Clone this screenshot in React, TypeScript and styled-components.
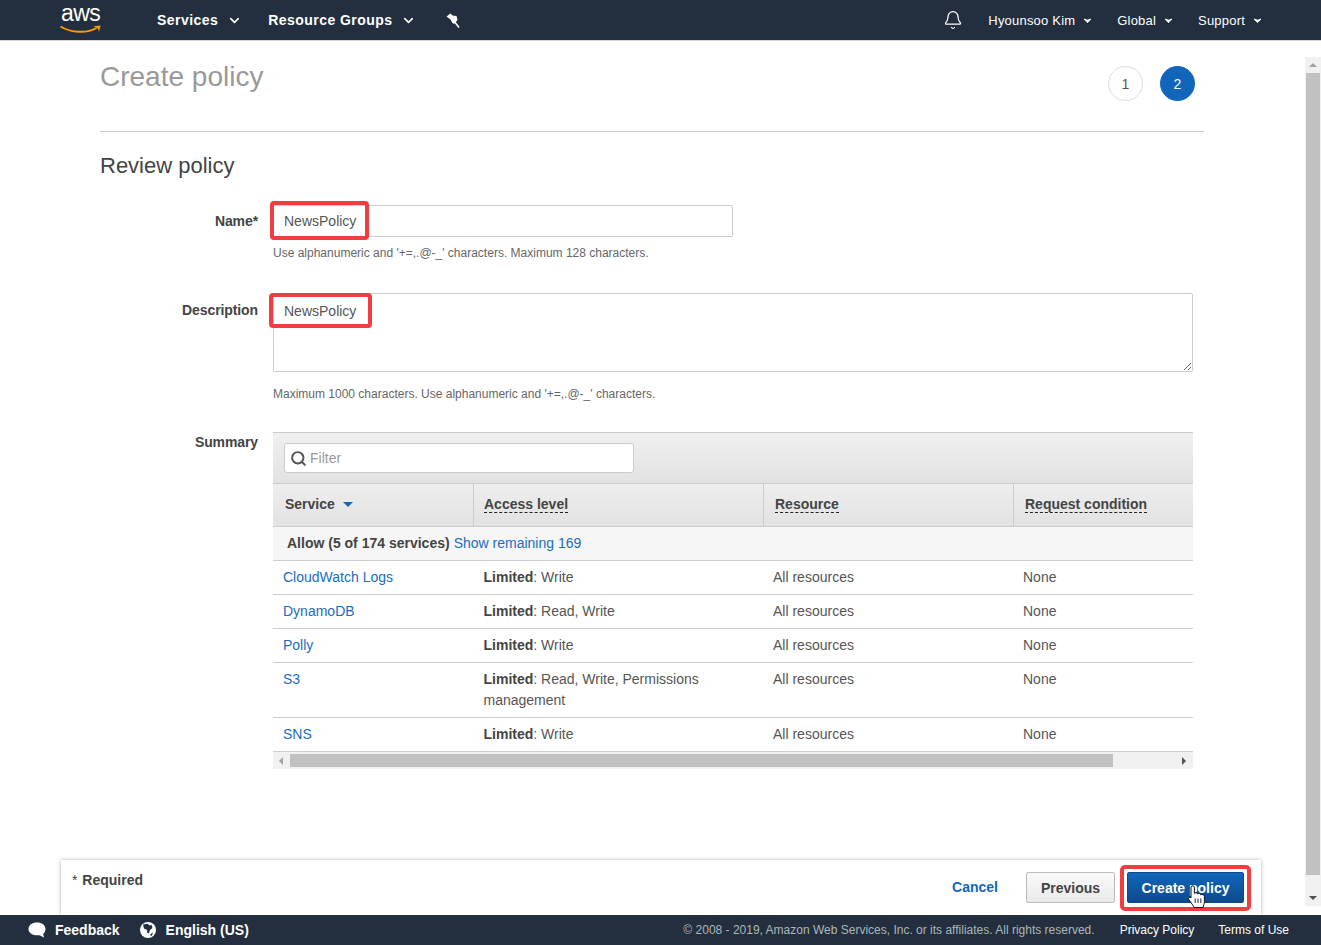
import React from 'react';
import styled, { createGlobalStyle } from 'styled-components';
import { Bell, ChevronDown, Search } from 'lucide-react';

const GlobalStyle = createGlobalStyle`
  html, body {
    margin: 0;
    padding: 0;
    height: 100%;
    overflow: hidden;
    background: #fff;
    font-family: "Liberation Sans", Arial, sans-serif;
    font-size: 14px;
    color: #444;
  }
  * { box-sizing: border-box; }
`;

const Page = styled.div`
  width: 1321px;
  height: 945px;
  display: flex;
  flex-direction: column;
`;

const TopNav = styled.header`
  height: 41px;
  flex: none;
  background: #232f3e;
  border-bottom: 1px solid #d5d5d5;
  display: flex;
  align-items: center;
  padding: 0 60px;
  color: #fff;
`;

const Logo = styled.div`
  width: 41px;
  height: 34px;
  margin-right: 56px;
  position: relative;
  text-align: center;
  font-size: 23px;
  line-height: 21px;
  letter-spacing: -0.6px;
  color: #fff;
  svg {
    position: absolute;
    left: 0;
    top: 20px;
  }
`;

const NavItem = styled.div<{ $gap: number }>`
  display: flex;
  align-items: center;
  font-weight: bold;
  font-size: 14px;
  letter-spacing: 0.45px;
  margin-right: ${(p) => p.$gap}px;
  svg {
    margin-left: 9px;
  }
`;

const PinWrap = styled.div`
  display: flex;
  align-items: center;
`;

const NavRight = styled.div`
  margin-left: auto;
  display: flex;
  align-items: center;
`;

const BellWrap = styled.div`
  display: flex;
  margin-right: 25px;
`;

const MenuItem = styled.div<{ $gap?: number }>`
  display: flex;
  align-items: center;
  font-size: 13px;
  letter-spacing: 0.2px;
  margin-right: ${(p) => p.$gap ?? 0}px;
  svg {
    margin-left: 9px;
  }
`;

const MenuCaret = () => (
  <svg width="7" height="5" viewBox="0 0 7 5">
    <path d="M0 0.6L3.5 1.8L7 0.6V1.6L3.5 5L0 1.6Z" fill="#fff" />
  </svg>
);

const Body = styled.div`
  flex: 1;
  display: flex;
  min-height: 0;
`;

const Content = styled.main`
  width: 1305px;
  display: flex;
  flex-direction: column;
`;

const Inner = styled.div`
  flex: 1;
  padding: 0 101px 0 100px;
`;

const TitleRow = styled.div`
  height: 91px;
  border-bottom: 1px solid #ccc;
  display: flex;
  justify-content: space-between;
  padding: 20px 9px 0 0;
`;

const Title = styled.h1`
  margin: 0;
  font-size: 28px;
  line-height: 32px;
  font-weight: normal;
  color: #999;
`;

const Steps = styled.div`
  display: flex;
  gap: 17px;
  margin-top: 5px;
`;

const Step = styled.div<{ $active?: boolean }>`
  width: 35px;
  height: 35px;
  border-radius: 50%;
  display: flex;
  align-items: center;
  justify-content: center;
  background: ${(p) => (p.$active ? '#1166bb' : '#fff')};
  color: ${(p) => (p.$active ? '#fff' : '#555')};
  border: 1px solid ${(p) => (p.$active ? '#1166bb' : '#ddd')};
`;

const SubTitle = styled.h2`
  margin: 21px 0 0;
  font-size: 22px;
  line-height: 26px;
  font-weight: normal;
  color: #444;
`;

const FormRow = styled.div<{ $top: number }>`
  display: grid;
  grid-template-columns: 158px 920px;
  column-gap: 15px;
  margin-top: ${(p) => p.$top}px;
`;

const Label = styled.label<{ $top: number }>`
  text-align: right;
  font-weight: bold;
  color: #444;
  line-height: 16px;
  padding-top: ${(p) => p.$top}px;
  letter-spacing: -0.1px;
`;

const Highlight = styled.span`
  position: absolute;
  border: 4px solid #f13d3f;
  border-radius: 4px;
  pointer-events: none;
`;

const FieldWrap = styled.div`
  position: relative;
`;

const NameInput = styled.input`
  display: block;
  width: 460px;
  height: 32px;
  border: 1px solid #ccc;
  border-radius: 2px;
  padding: 0 10px;
  font-family: inherit;
  font-size: 14px;
  color: #555;
  outline: none;
`;

const NameHighlight = styled(Highlight)`
  left: -3px;
  top: -4px;
  width: 99px;
  height: 39px;
`;

const DescArea = styled.textarea`
  display: block;
  width: 920px;
  height: 79px;
  border: 1px solid #ccc;
  border-radius: 2px;
  padding: 8px 10px;
  margin: 0;
  font-family: inherit;
  font-size: 14px;
  line-height: 18px;
  color: #555;
  outline: none;
`;

const DescHighlight = styled(Highlight)`
  left: -4px;
  top: 0;
  width: 103px;
  height: 35px;
`;

const Hint = styled.div<{ $top: number }>`
  margin-top: ${(p) => p.$top}px;
  font-size: 12px;
  line-height: 14px;
  color: #666;
`;

const PolicyTable = styled.div`
  width: 920px;
`;

const FilterBar = styled.div`
  height: 51px;
  padding: 10px 11px;
  background: linear-gradient(#f0f0f0, #e2e2e2);
  border-top: 1px solid #ccc;
`;

const FilterBox = styled.div`
  width: 350px;
  height: 30px;
  background: #fff;
  border: 1px solid #ccc;
  border-radius: 3px;
  display: flex;
  align-items: center;
  padding-left: 5px;
  gap: 3px;
  color: #999;
  svg {
    color: #555;
  }
`;

const Row = styled.div<{ $height: number }>`
  display: grid;
  grid-template-columns: 200px 290px 250px 180px;
  height: ${(p) => p.$height}px;
  border-bottom: 1px solid #ccc;
`;

const HeadRow = styled(Row)`
  background: linear-gradient(#eee, #e2e2e2);
  border-top: 1px solid #ccc;
`;

const HeadCell = styled.div`
  display: flex;
  align-items: center;
  padding: 0 0 1px 10px;
  font-weight: bold;
  color: #444;
  &:first-child {
    padding: 0 0 3px 12px;
  }
  &:nth-child(n + 3) {
    padding-left: 11px;
  }
  & + & {
    border-left: 1px solid #ccc;
  }
`;

const Dashed = styled.span`
  line-height: 16px;
  border-bottom: 1px dashed #222;
`;

const SortCaret = styled.span`
  width: 0;
  height: 0;
  margin-left: 8px;
  margin-top: 2px;
  border-left: 5px solid transparent;
  border-right: 5px solid transparent;
  border-top: 5px solid #1166bb;
`;

const GroupRow = styled.div`
  height: 34px;
  background: #f6f6f6;
  border-bottom: 1px solid #ccc;
  display: flex;
  align-items: center;
  padding: 0 0 2px 14px;
  gap: 4px;
  b {
    color: #444;
  }
`;

const Link = styled.a`
  color: #1a6dc0;
  text-decoration: none;
`;

const Cell = styled.div<{ $left: number }>`
  padding: 6px 10px 0 ${(p) => p.$left}px;
  line-height: 21px;
  color: #555;
  b {
    color: #444;
  }
`;

const HScroll = styled.div`
  height: 17px;
  background: #f1f1f1;
  display: flex;
  align-items: center;
  padding: 0 7px 0 6px;
`;

const HThumb = styled.div`
  width: 823px;
  height: 13px;
  background: #c1c1c1;
  margin: 0 auto 0 7px;
`;

const ArrowH = styled.span<{ $right?: boolean }>`
  width: 0;
  height: 0;
  border-top: 4px solid transparent;
  border-bottom: 4px solid transparent;
  border-left: ${(p) => (p.$right ? '4px solid #505050' : '0')};
  border-right: ${(p) => (p.$right ? '0' : '4px solid #a3a3a3')};
`;

const ActionBar = styled.div`
  width: 1200px;
  height: 55px;
  margin-left: 61px;
  flex: none;
  background: #fff;
  box-shadow: 0 0 4px rgba(0, 0, 0, 0.3);
  display: flex;
  justify-content: space-between;
  padding: 12px 17px 0 11px;
`;

const Required = styled.div`
  font-weight: bold;
  color: #444;
  line-height: 16px;
  span {
    font-weight: normal;
    margin-right: 1px;
  }
`;

const Actions = styled.div`
  display: flex;
  align-items: flex-start;
  position: relative;
`;

const CancelLink = styled(Link)`
  font-weight: bold;
  margin: 7px 28px 0 0;
  line-height: 16px;
  color: #1166bb;
`;

const Secondary = styled.button`
  width: 89px;
  height: 31px;
  padding: 0;
  margin-right: 12px;
  border: 1px solid #bbb;
  border-radius: 2px;
  background: linear-gradient(#fafafa, #e9e9e9);
  font-family: inherit;
  font-size: 14px;
  font-weight: bold;
  color: #444;
`;

const Primary = styled.button`
  width: 117px;
  height: 31px;
  padding: 0;
  border: 1px solid #0c4a8a;
  border-radius: 2px;
  background: linear-gradient(#1166bb, #0d4a8c);
  font-family: inherit;
  font-size: 14px;
  font-weight: bold;
  color: #fff;
`;

const ButtonHighlight = styled(Highlight)`
  right: -7px;
  top: -7px;
  width: 131px;
  height: 46px;
  border-radius: 5px;
`;

const HandCursor = styled.svg`
  position: absolute;
  right: 38px;
  top: 13px;
`;

const VScroll = styled.aside`
  width: 16px;
  height: 849px;
  margin-top: 16px;
  background: #f1f1f1;
  display: flex;
  flex-direction: column;
  align-items: center;
`;

const VThumb = styled.div`
  width: 14px;
  height: 802px;
  background: #c1c1c1;
  margin: 6px 0 auto;
`;

const ArrowV = styled.span<{ $down?: boolean }>`
  width: 0;
  height: 0;
  margin: ${(p) => (p.$down ? '0 0 6px' : '6px 0 0')};
  border-left: 4px solid transparent;
  border-right: 4px solid transparent;
  border-bottom: ${(p) => (p.$down ? '0' : '4px solid #a3a3a3')};
  border-top: ${(p) => (p.$down ? '4px solid #505050' : '0')};
`;

const Footer = styled.footer`
  height: 30px;
  flex: none;
  background: #232f3e;
  display: flex;
  align-items: center;
  padding: 0 32px 0 28px;
  color: #fff;
`;

const FooterItem = styled.div<{ $gap: number; $icon: number }>`
  display: flex;
  align-items: center;
  gap: ${(p) => p.$icon}px;
  margin-right: ${(p) => p.$gap}px;
  font-weight: bold;
`;

const Copyright = styled.div`
  margin-left: auto;
  margin-right: 25px;
  font-size: 12px;
  color: #aab7b8;
`;

const FooterLink = styled.div<{ $gap?: number }>`
  font-size: 12px;
  margin-right: ${(p) => p.$gap ?? 0}px;
`;

const rows = [
  { service: 'CloudWatch Logs', access: 'Write', height: 34 },
  { service: 'DynamoDB', access: 'Read, Write', height: 34 },
  { service: 'Polly', access: 'Write', height: 34 },
  { service: 'S3', access: 'Read, Write, Permissions management', height: 55 },
  { service: 'SNS', access: 'Write', height: 34 },
];

const App: React.FC = () => {
  return (
    <Page>
      <GlobalStyle />
      <TopNav>
        <Logo>
          aws
          <svg width="41" height="12" viewBox="0 0 41 12">
            <path d="M0.5 3.5C11 10 27 10.5 36.5 5" fill="none" stroke="#f90" strokeWidth="2" />
            <path d="M33.5 3.2L40.6 2.6L39 9L38 5.4Z" fill="#f90" />
          </svg>
        </Logo>
        <NavItem $gap={26}>
          Services
          <ChevronDown size={15} strokeWidth={2.6} />
        </NavItem>
        <NavItem $gap={30}>
          Resource Groups
          <ChevronDown size={15} strokeWidth={2.6} />
        </NavItem>
        <PinWrap>
          <svg width="14" height="15" viewBox="0 0 14 15">
            <path d="M0.5 3.5L4.5 0.5L6.5 2.5L10.5 3L11.5 7L8 11L6.5 10L4.5 6.5Z" fill="#fff" />
            <path d="M8 8L13 14.5" stroke="#fff" strokeWidth="1.5" />
          </svg>
        </PinWrap>
        <NavRight>
          <BellWrap>
            <Bell size={20} strokeWidth={1.5} color="#fff" />
          </BellWrap>
          <MenuItem $gap={26}>
            Hyounsoo Kim
            <MenuCaret />
          </MenuItem>
          <MenuItem $gap={26}>
            Global
            <MenuCaret />
          </MenuItem>
          <MenuItem>
            Support
            <MenuCaret />
          </MenuItem>
        </NavRight>
      </TopNav>
      <Body>
        <Content>
          <Inner>
            <TitleRow>
              <Title>Create policy</Title>
              <Steps>
                <Step>1</Step>
                <Step $active>2</Step>
              </Steps>
            </TitleRow>
            <SubTitle>Review policy</SubTitle>
            <FormRow $top={26}>
              <Label $top={8}>Name*</Label>
              <div>
                <FieldWrap>
                  <NameInput defaultValue="NewsPolicy" readOnly />
                  <NameHighlight />
                </FieldWrap>
                <Hint $top={9}>Use alphanumeric and '+=,.@-_' characters. Maximum 128 characters.</Hint>
              </div>
            </FormRow>
            <FormRow $top={33}>
              <Label $top={9}>Description</Label>
              <div>
                <FieldWrap>
                  <DescArea defaultValue="NewsPolicy" readOnly />
                  <DescHighlight />
                </FieldWrap>
                <Hint $top={15}>Maximum 1000 characters. Use alphanumeric and '+=,.@-_' characters.</Hint>
              </div>
            </FormRow>
            <FormRow $top={31}>
              <Label $top={2}>Summary</Label>
              <PolicyTable>
                <FilterBar>
                  <FilterBox>
                    <Search size={17} strokeWidth={2.8} />
                    Filter
                  </FilterBox>
                </FilterBar>
                <HeadRow $height={44}>
                  <HeadCell>
                    Service
                    <SortCaret />
                  </HeadCell>
                  <HeadCell><Dashed>Access level</Dashed></HeadCell>
                  <HeadCell><Dashed>Resource</Dashed></HeadCell>
                  <HeadCell><Dashed>Request condition</Dashed></HeadCell>
                </HeadRow>
                <GroupRow>
                  <b>Allow (5 of 174 services)</b>
                  <Link>Show remaining 169</Link>
                </GroupRow>
                {rows.map((row) => (
                  <Row key={row.service} $height={row.height}>
                    <Cell $left={10}><Link>{row.service}</Link></Cell>
                    <Cell $left={10.5}><b>Limited</b>: {row.access}</Cell>
                    <Cell $left={10}>All resources</Cell>
                    <Cell $left={10}>None</Cell>
                  </Row>
                ))}
                <HScroll>
                  <ArrowH />
                  <HThumb />
                  <ArrowH $right />
                </HScroll>
              </PolicyTable>
            </FormRow>
          </Inner>
          <ActionBar>
            <Required><span>*</span> Required</Required>
            <Actions>
              <CancelLink>Cancel</CancelLink>
              <Secondary>Previous</Secondary>
              <Primary>Create policy</Primary>
              <ButtonHighlight />
              <HandCursor width="18" height="23" viewBox="0 0 18 23">
                <path
                  d="M3 2.2C3 0.4 6.4 0.4 6.4 2.2V8.4C7 7.4 9.4 7.4 9.8 9C10.4 8 12.6 8.2 12.8 9.8C13.6 9 16.4 9.4 16.4 11.6V16.5C16.4 19 15.4 20.5 15 22.5H6.4L0.8 14.5C-0.2 12.5 2.2 11.4 3 13Z"
                  fill="#fff"
                  stroke="#111"
                  strokeWidth="1"
                />
                <path d="M7.2 13.5V18M10 13.5V18M12.8 13.5V18" stroke="#111" strokeWidth="0.9" />
              </HandCursor>
            </Actions>
          </ActionBar>
        </Content>
        <VScroll>
          <ArrowV />
          <VThumb />
          <ArrowV $down />
        </VScroll>
      </Body>
      <Footer>
        <FooterItem $gap={20} $icon={9}>
          <svg width="18" height="18" viewBox="0 0 18 18">
            <path d="M9 1.5C13.8 1.5 17.5 4.2 17.5 8C17.5 10.2 16.4 12 15.2 13L16 16.5L11.6 14.2C6 15 0.5 12.5 0.5 8C0.5 4.2 4.2 1.5 9 1.5Z" fill="#fff" />
          </svg>
          Feedback
        </FooterItem>
        <FooterItem $gap={0} $icon={10}>
          <svg width="16" height="16" viewBox="0 0 16 16">
            <circle cx="8" cy="8" r="8" fill="#fff" />
            <path d="M3 2.5L7.5 1.8L9.5 3.5L11.5 2.8L12.5 6L10 8L8.8 11.5L7 10.5L7.2 8L4 6.5Z" fill="#232f3e" />
            <path d="M10.5 12L13 10.5L12 13.5L10.5 14Z" fill="#232f3e" />
          </svg>
          English (US)
        </FooterItem>
        <Copyright>© 2008 - 2019, Amazon Web Services, Inc. or its affiliates. All rights reserved.</Copyright>
        <FooterLink $gap={24}>Privacy Policy</FooterLink>
        <FooterLink>Terms of Use</FooterLink>
      </Footer>
    </Page>
  );
};

export default App;
